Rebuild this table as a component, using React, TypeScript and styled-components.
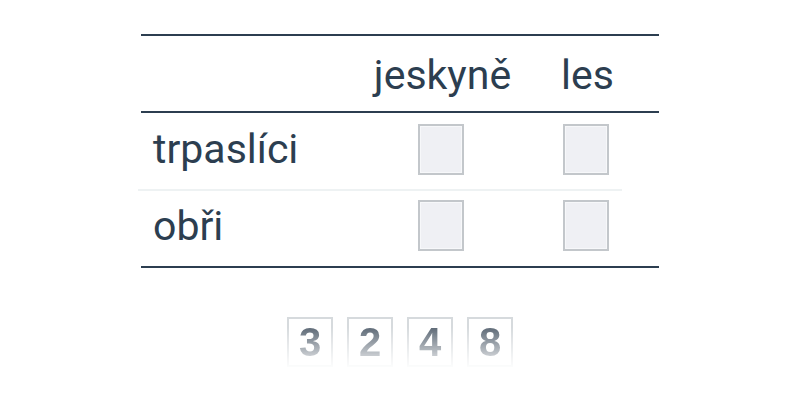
import React from "react";
import styled, { createGlobalStyle } from "styled-components";

const Global = createGlobalStyle`
  html, body { margin: 0; padding: 0; background: #ffffff; }
  body { font-family: Roboto, "Noto Sans", sans-serif; color: #2c3e50; }
`;

const Page = styled.div`
  width: 800px;
  height: 400px;
  display: flex;
  flex-direction: column;
  align-items: center;
  padding-top: 34px;
  box-sizing: border-box;
`;

const Table = styled.div`
  width: 518px;
  border-top: 2px solid #2c3e50;
  border-bottom: 2px solid #2c3e50;
  display: flex;
  flex-direction: column;
`;

const Row = styled.div<{ $head?: boolean; $sep?: boolean; $h: number }>`
  display: grid;
  grid-template-columns: 220px 160px 130px;
  align-items: center;
  height: ${(p) => p.$h}px;
  border-bottom: ${(p) =>
    p.$head ? "2px solid #2c3e50" : p.$sep ? "2px solid #eef2f3" : "none"};
  margin-right: ${(p) => (p.$sep ? "37px" : "0")};
  margin-left: ${(p) => (p.$sep ? "-3px" : "0")};
  padding-left: ${(p) => (p.$sep ? "3px" : "0")};
`;

const Label = styled.div`
  font-size: 41px;
  padding-left: 12px;
  line-height: 1;
  padding-bottom: 4px;
`;

const HeadCell = styled.div`
  font-size: 41px;
  text-align: center;
  line-height: 1;
  padding-top: 4px;
  padding-left: 3px;
`;

const Cell = styled.div`
  display: flex;
  justify-content: center;
`;

const Box = styled.div<{ $up: number }>`
  width: 42px;
  height: 47px;
  margin-bottom: ${(p) => p.$up}px;
  border: 2px solid #c3c7cb;
  box-shadow: inset 0 0 0 1px #f7f8fa;
  background: #eff0f4;
`;

const Digits = styled.div`
  margin-top: 49px;
  display: flex;
  gap: 14px;
  -webkit-mask-image: linear-gradient(to bottom, #000 20%, rgba(0,0,0,0.08) 100%);
  mask-image: linear-gradient(to bottom, #000 20%, rgba(0,0,0,0.08) 100%);
`;

const Digit = styled.div`
  width: 42px;
  height: 46px;
  border: 2px solid #d6dadd;
  display: flex;
  align-items: center;
  justify-content: center;
  font-family: "Liberation Sans", Arial, sans-serif;
  font-weight: bold;
  font-size: 40px;
  color: #5c6875;
`;

export default function App() {
  return (
    <>
      <Global />
      <Page>
        <Table>
          <Row $head $h={75}>
            <div />
            <HeadCell>jeskyně</HeadCell>
            <HeadCell>les</HeadCell>
          </Row>
          <Row $sep $h={76}>
            <Label>trpaslíci</Label>
            <Cell><Box $up={3} /></Cell>
            <Cell><Box $up={3} /></Cell>
          </Row>
          <Row $h={75}>
            <Label>obři</Label>
            <Cell><Box $up={6} /></Cell>
            <Cell><Box $up={6} /></Cell>
          </Row>
        </Table>
        <Digits>
          {["3", "2", "4", "8"].map((d) => (
            <Digit key={d}>{d}</Digit>
          ))}
        </Digits>
      </Page>
    </>
  );
}
